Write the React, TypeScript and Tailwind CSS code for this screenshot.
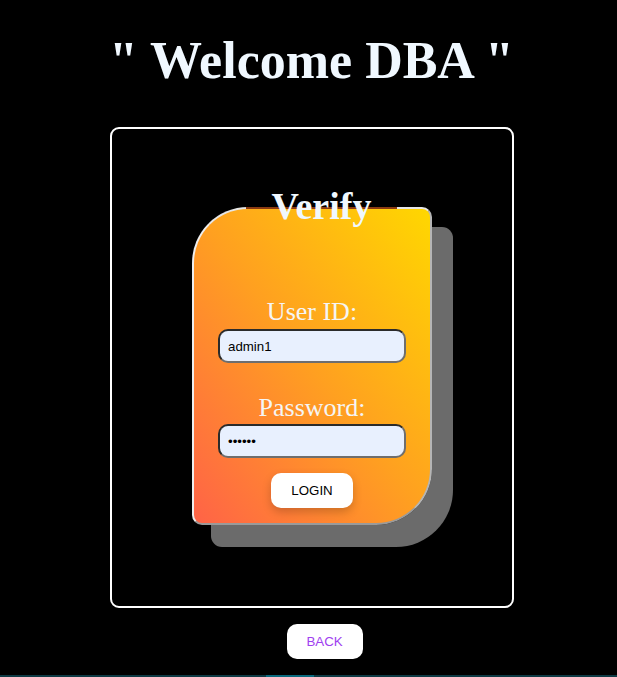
import { useState } from 'react';

const serif = "font-['Liberation_Serif',_'Times_New_Roman',_serif]";
const sans = "font-['Liberation_Sans',_Arial,_sans-serif]";

export default function App() {
  const [userId, setUserId] = useState('admin1');
  const [password, setPassword] = useState('secret');

  return (
    <div className="flex min-h-[677px] flex-col items-center bg-black pl-[6px]">
      <h1 className={`${serif} mt-[32px] text-[52px] font-bold leading-[58px] text-[#f0f8ff]`}>
        " Welcome DBA "
      </h1>

      <div className="mt-[37px] ml-[1px] flex h-[481px] w-[404px] justify-center rounded-[9px] border-2 border-white pt-[78px]">
        <div className="relative h-[318px] w-[240px] rounded-tl-[56px] rounded-tr-[10px] rounded-br-[56px] rounded-bl-[10px] border-2 border-t-[#e6e6e6] border-l-[#eeeeee] border-r-[#b5b5b5] border-b-[#9a9a9a] bg-[linear-gradient(to_top_right,#ff6347,#ffa020_50%,#ffd700)] shadow-[20px_21px_0_1px_#6b6b6b]">
          <div className="absolute -top-[2px] left-[52px] h-[2px] w-[151px] bg-[#8a3a12]">
            <h2
              className={`${serif} absolute -top-[22px] left-0 right-0 text-center text-[38px] font-bold leading-[42px] text-[#f0f8ff]`}
            >
              Verify
            </h2>
          </div>

          <form
            className="flex flex-col items-center pt-[88px]"
            onSubmit={(e) => e.preventDefault()}
          >
            <label htmlFor="uid" className={`${serif} text-[26px] leading-[30px] text-[#f5f5f5]`}>
              User ID:
            </label>
            <input
              id="uid"
              value={userId}
              onChange={(e) => setUserId(e.target.value)}
              className={`${sans} mt-[2px] h-[34px] w-[188px] rounded-[10px] border-2 border-t-[#2b2b2b] border-l-[#2b2b2b] border-r-[#6e6e6e] border-b-[#6e6e6e] bg-[#e8f0fe] px-[8px] text-[13.3px] text-black outline-none`}
            />

            <label htmlFor="pwd" className={`${serif} mt-[30px] text-[26px] leading-[30px] text-[#f5f5f5]`}>
              Password:
            </label>
            <input
              id="pwd"
              type="password"
              value={password}
              onChange={(e) => setPassword(e.target.value)}
              className={`${sans} mt-[1px] h-[34px] w-[188px] rounded-[10px] border-2 border-t-[#2b2b2b] border-l-[#2b2b2b] border-r-[#6e6e6e] border-b-[#6e6e6e] bg-[#e8f0fe] px-[8px] text-[13.3px] text-black outline-none`}
            />

            <button
              type="submit"
              className={`${sans} mt-[15px] h-[35px] w-[82px] rounded-[10px] bg-white text-[13.3px] text-black shadow-[0_4px_10px_rgba(0,0,0,0.2)]`}
            >
              LOGIN
            </button>
          </form>
        </div>
      </div>

      <button
        type="button"
        className={`${sans} ml-[26px] mt-[16px] h-[35px] w-[76px] rounded-[10px] bg-white text-[13.3px] text-[#a040f0]`}
      >
        BACK
      </button>

      <div className="-ml-[6px] mt-auto flex h-[2px] w-[calc(100%+6px)] bg-[#0e3a44]">
        <div className="ml-[266px] w-[48px] bg-[#0a6a7e]" />
      </div>
    </div>
  );
}
